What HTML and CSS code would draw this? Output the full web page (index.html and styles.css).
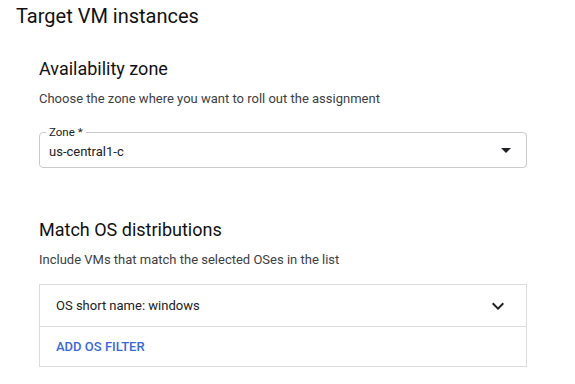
FILE: index.html
```html
<!DOCTYPE html>
<html>
<head>
<meta charset="utf-8">
<link rel="stylesheet" href="styles.css">
</head>
<body>
<div class="page">
  <h1 class="title">Target VM instances</h1>
  <div class="section">
    <h2 class="heading zone-heading">Availability zone</h2>
    <p class="desc">Choose the zone where you want to roll out the assignment</p>
    <div class="field">
      <span class="field-label">Zone *</span>
      <span class="field-value">us-central1-c</span>
      <svg class="drop" width="24" height="24" viewBox="0 0 24 24"><path d="M7 10l5 5 5-5z" fill="#202124"/></svg>
    </div>
    <h2 class="heading os-heading">Match OS distributions</h2>
    <p class="desc">Include VMs that match the selected OSes in the list</p>
    <div class="list">
      <div class="row">
        <span class="row-text">OS short name: windows</span>
        <svg class="chev" width="24" height="24" viewBox="0 0 24 24"><path d="M16.59 8.59L12 13.17 7.41 8.59 6 10l6 6 6-6z" fill="#202124"/></svg>
      </div>
      <div class="row">
        <span class="add">ADD OS FILTER</span>
      </div>
    </div>
  </div>
</div>
</body>
</html>
```
FILE: styles.css
```css
* { box-sizing: border-box; }
html, body { margin: 0; padding: 0; background: #fff; }
body { font-family: Roboto, "Noto Sans", Arial, sans-serif; color: #202124; }
.page { padding-top: 4px; }
.title { margin: 0; padding-left: 16px; font-size: 20px; line-height: 24px; font-weight: 400; color: #111; }
.section { padding-left: 39px; width: 527px; }
.heading { margin: 0; font-size: 18px; line-height: 24px; font-weight: 400; color: #111; }
.zone-heading { margin-top: 29px; }
.desc { margin: 0; margin-top: 10px; font-size: 13px; line-height: 16px; color: #3c4043; }
.field {
  position: relative;
  margin-top: 25px;
  height: 36px;
  border: 1px solid #c8cacd;
  border-radius: 4px;
  display: flex;
  align-items: center;
  padding: 0 9px;
}
.field-label {
  position: absolute;
  left: 6px;
  top: -9px;
  padding: 0 3px;
  background: #fff;
  font-size: 11.5px;
  line-height: 16px;
  color: #202124;
}
.field-value { flex: 1; font-size: 13px; line-height: 16px; padding-top: 4px; }
.drop { margin-right: -1px; }
.os-heading { margin-top: 50px; }
.list { margin-top: 16px; border: 1px solid #dadce0; }
.row {
  height: 41px;
  display: flex;
  align-items: center;
  padding: 0 16px;
}
.row + .row { border-top: 1px solid #dadce0; height: 40px; }
.row-text { flex: 1; font-size: 13px; }
.chev { margin-right: 0; }
.add { font-size: 13px; font-weight: 500; color: #3b68d9; }
```
